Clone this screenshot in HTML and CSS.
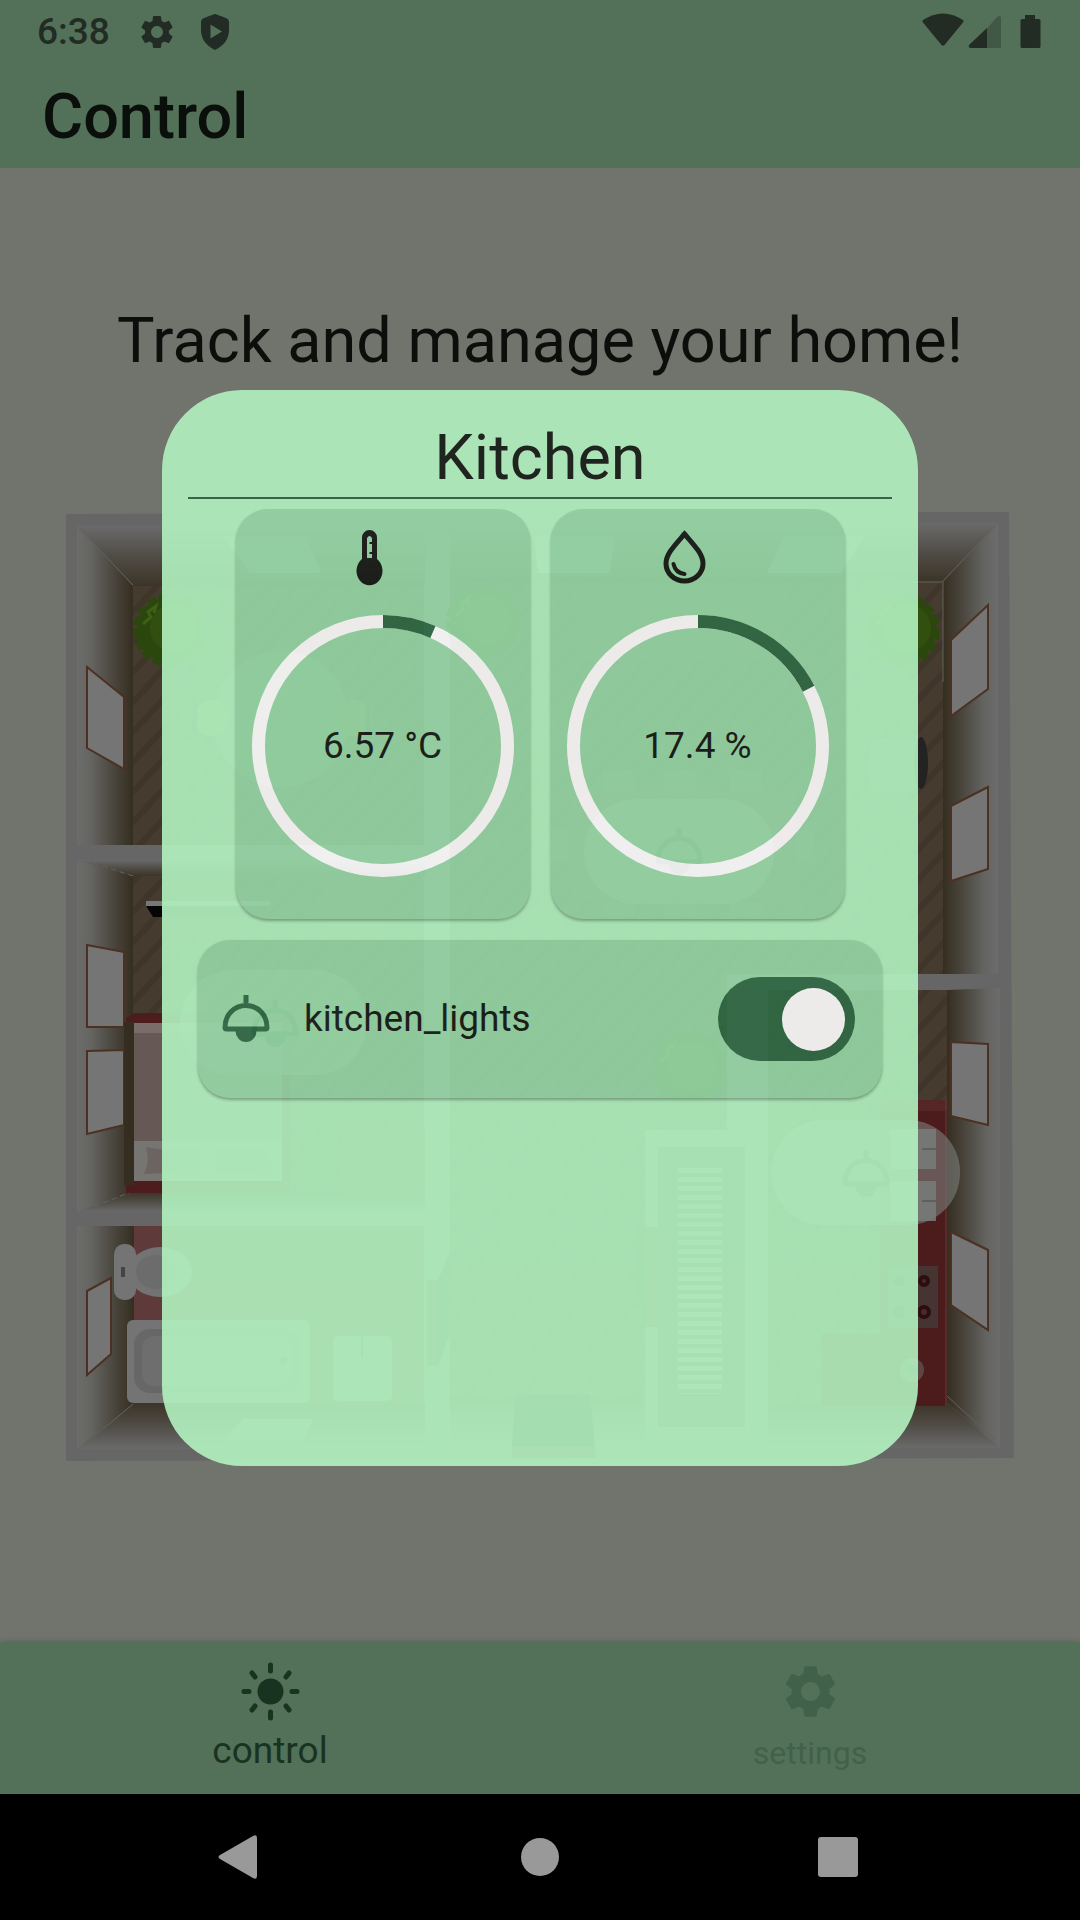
FILE: index.html
```html
<!DOCTYPE html>
<html lang="en">
<head>
<meta charset="utf-8">
<meta name="viewport" content="width=device-width, initial-scale=1">
<title>Control</title>
<link rel="stylesheet" href="styles.css">
</head>
<body>
<svg class="defs" width="0" height="0" aria-hidden="true">
  <defs>
    <symbol id="gear" viewBox="0 0 24 24"><path d="M19.14 12.94c.04-.3.06-.61.06-.94 0-.32-.02-.64-.07-.94l2.03-1.58c.18-.14.23-.41.12-.61l-1.92-3.32c-.12-.22-.37-.29-.59-.22l-2.39.96c-.5-.38-1.03-.7-1.62-.94l-.36-2.54c-.04-.24-.24-.41-.48-.41h-3.84c-.24 0-.43.17-.47.41l-.36 2.54c-.59.24-1.13.57-1.62.94l-2.39-.96c-.22-.08-.47 0-.59.22L2.74 8.87c-.12.21-.08.47.12.61l2.03 1.58c-.05.3-.09.63-.09.94s.02.64.07.94l-2.03 1.58c-.18.14-.23.41-.12.61l1.92 3.32c.12.22.37.29.59.22l2.39-.96c.5.38 1.03.7 1.62.94l.36 2.54c.05.24.24.41.48.41h3.84c.24 0 .44-.17.47-.41l.36-2.54c.59-.24 1.13-.56 1.62-.94l2.39.96c.22.08.47 0 .59-.22l1.92-3.32c.12-.22.07-.47-.12-.61l-2.01-1.58zM12 15.6c-1.98 0-3.6-1.62-3.6-3.6s1.62-3.6 3.6-3.6 3.6 1.62 3.6 3.6-1.62 3.6-3.6 3.6z"/></symbol>
    <symbol id="lamp" viewBox="0 0 48 48"><path d="M21.500 0h5v8h-5z"/><path d="M3 32.500C3 20 12 10.500 24 10.500S45 20 45 32.500q0 1.500-1.500 1.500h-39Q3 34 3 32.500z" fill="none" stroke="currentColor" stroke-width="5"/><path d="M13.500 36h21a10.500 11 0 0 1-21 0z"/></symbol>
  </defs>
</svg>
<div class="screen">
  <header class="top">
    <div class="status">
      <div class="status-group">
        <time class="clock">6:38</time>
        <svg class="status-icon gear-small" aria-hidden="true"><use href="#gear"/></svg>
        <svg class="status-icon" viewBox="0 0 40 40" aria-hidden="true"><path fill-rule="evenodd" d="M20 2q1 0 12 4.500 2 1 2 3.500v8q0 13-14 20Q6 31 6 18v-8q0-2.500 2-3.500Q19 2 20 2zM15.500 12.500v14L27 19.500z"/></svg>
      </div>
      <svg class="signals" viewBox="0 0 120 40" aria-hidden="true">
        <path d="M2 9Q22-4 42 9q1 1 0 2.500L23.500 34q-1.500 1.500-3 0L2 11.500Q1 10 2 9z"/>
        <path opacity=".35" d="M66 17.500 76 6q2-2 4 0v30q0 1-1 1H66z"/>
        <path d="M66 17v20H49q-2-1-1-3z"/>
        <path d="M104 4h10v4h4q1.500 0 1.500 1.500v26q0 1.500-1.500 1.500h-17q-1.500 0-1.500-1.500v-26q0-1.500 1.500-1.500h3z"/>
      </svg>
    </div>
    <h1 class="app-title">Control</h1>
  </header>

  <main class="content">
    <p class="headline">Track and manage your home!</p>
    <svg class="plan" viewBox="66 512 948 950" role="img" aria-label="Floor plan">
      <defs>
        <linearGradient id="wl"><stop offset="0" stop-color="#6c6c6c"/><stop offset=".25" stop-color="#646461"/><stop offset=".6" stop-color="#4d4a42"/><stop offset="1" stop-color="#352d20"/></linearGradient>
        <linearGradient id="wr" x1="1" x2="0"><stop offset="0" stop-color="#6c6c6c"/><stop offset=".25" stop-color="#646461"/><stop offset=".6" stop-color="#4d4a42"/><stop offset="1" stop-color="#352d20"/></linearGradient>
        <linearGradient id="wt" x2="0" y2="1"><stop offset="0" stop-color="#6a6a6a"/><stop offset=".5" stop-color="#504d47"/><stop offset="1" stop-color="#3b3427"/></linearGradient>
        <linearGradient id="wb" x2="0" y1="1" y2="0"><stop offset="0" stop-color="#6a6a6a"/><stop offset=".5" stop-color="#504d47"/><stop offset="1" stop-color="#3b3427"/></linearGradient>
        <pattern id="wood" width="40" height="30" patternUnits="userSpaceOnUse" patternTransform="skewY(-47)"><path fill="#453c2f" d="M0 0h40v30H0z"/><path fill="#3f352a" d="M0 0h40v9H0z"/></pattern>
        <pattern id="steps" y="1168" x="678" width="44" height="9" patternUnits="userSpaceOnUse"><path fill="#777" d="M0 0h44v5H0z"/></pattern>
        <g id="tree"><circle r="33" fill="#2c470d"/><circle r="33" fill="none" stroke="#2c470d" stroke-width="8" stroke-dasharray="9 3"/><circle r="24" cx="4" cy="-2" fill="#334f10"/><path d="M-27-6l8-7-3-5 8-6-2 7" fill="none" stroke="#3c6116" stroke-width="3"/></g>
      </defs>
      <path fill="#666" d="M66 514l943-2 5 946-948 3z"/>

      <g stroke="none">
        <path fill="url(#wl)" d="M77 526l56 60v259H77z"/><path fill="url(#wt)" d="M77 526h348v60H133z"/>
        <path fill="url(#wl)" d="M77 860l56 16v316l-56 20z"/><path fill="url(#wt)" d="M77 860h348v16H133z"/><path fill="url(#wb)" d="M77 1212l56-20h292v20z"/>
        <path fill="url(#wl)" d="M77 1226h57v177l-57 46z"/><path fill="url(#wb)" d="M77 1449l57-46h291v46z"/>
        <path fill="url(#wt)" d="M450 523h548l-55 59H450z"/><path fill="url(#wr)" d="M998 523v451h-55V582z"/>
        <path fill="url(#wr)" d="M1000 988v460l-53-45V990z"/><path fill="url(#wb)" d="M768 1403h179l53 45H768z"/><path fill="url(#wb)" d="M450 1395h195v52H450z"/>
      </g>
      <path fill="url(#wood)" d="M133 586h291v259H133zM133 876h291v316H133zM450 582h493v392H450zM450 974h195v421H450zM645 974h82v156h-82zM768 990h179v413H768z"/>
      <path fill="#5f3a3a" d="M134 1226h290v177H134z"/>
      <path d="M202 1226v177M244 1226v177M320 1226v177M396 1226v177M134 1259h290M134 1365h290" stroke="#563434" fill="none"/>
      <path d="M79 528l54 57M996 525l-54 57h-40M943 582v100M133 1404l-50 42M947 1396l48 44" fill="none" stroke="#62625b"/>
      <path d="M133 876l-42-14M133 1191l-42 17" fill="none" stroke="#62625b" stroke-dasharray="5 4"/>
      <path fill="#454040" d="M658 1147h87v280h-87z"/><path fill="url(#steps)" d="M678 1168h44v226h-44z"/>
      <path fill="#5c3b36" d="M646 1227h12v100h-12zM427 1280h11v86h-11z"/><path fill="#39332c" d="M636 1210l10 17v100l-10-32zM450 1252l-12 28v86l12-32z"/>

      <g fill="#757575" stroke="#4c3123" stroke-width="2">
        <path d="M87 667l37 30v72l-37-21zM87 945l37 7v75H87zM87 1051l37-1v75l-37 9zM87 1291l24-13v76l-24 21z"/>
        <path d="M951 640l37-35v84l-37 27zM951 806l37-19v82l-37 12zM951 1042l37 2v81l-37-9zM951 1232l37 18v80l-37-25z"/>
      </g>
      <path fill="#757575" d="M223 536h83l15 37h-71zM534 536h81l-5 37h-72zM784 536h80l-23 37h-74zM243 1419h70l-11 23h-80z"/>

      <use href="#tree" x="170" y="630"/><use href="#tree" x="903" y="630"/><use href="#tree" x="483" y="622"/><use href="#tree" x="688" y="1068"/>
      <circle cx="281" cy="719" r="68" fill="#56564a"/><circle cx="212" cy="718" r="18" fill="#666640"/><circle cx="354" cy="718" r="18" fill="#5a5a3c"/>
      <path d="M187 695l8 6v32l-8 3M376 695l-8 6v32l8 3" fill="none" stroke="#333" stroke-width="4"/>
      <path fill="#4c3c2d" d="M571 586h215v20H571zM578 606h203v55H578z"/><path fill="#513a30" d="M571 793h224v107H571z"/>
      <path fill="#524a3a" d="M602 770h32v22h-32zM664 770h32v22h-32zM730 770h32v22h-32zM551 830h18v32h-18zM796 830h18v32h-18zM602 902h32v14h-32zM664 902h32v14h-32zM730 902h32v14h-32z"/>
      <rect x="870" y="738" width="46" height="54" rx="8" fill="#4c4744"/><ellipse cx="921" cy="763" rx="7" ry="26" fill="#242323"/>
      <path fill="#523e34" d="M177 888h64v46h-64zM325 876h60v60h-60zM342 1127h83v70h-83z"/>
      <path fill="#777" d="M146 901h124v6H146z"/><path fill="#050505" d="M146 906h16v11h-9zM162 906h0z"/><path fill="#35302a" d="M162 906h108l-12 11h-96z"/>

      <path fill="#4d1c1c" d="M126 1018l9-5h155v180H126v-8z"/><path fill="#352d20" d="M124 1022h10v163h-10z"/>
      <path fill="#7a6c69" d="M134 1023h148v10H134z"/><path fill="#665955" d="M134 1033h148v108H134z"/><path fill="#777572" d="M134 1141h148v40H134z"/>
      <path fill="#6c6460" d="M146 1147q30 6 52 1 3 16 0 28-26-4-54-2 6-12 2-27zM216 1147q26 5 50 1 6 16 4 28-26-4-54-2z"/>

      <ellipse cx="160" cy="1272" rx="32" ry="25" fill="#737373"/><ellipse cx="156" cy="1272" rx="20" ry="17" fill="#6c6c6c"/><rect x="114" y="1244" width="22" height="56" rx="10" fill="#747474"/><path fill="#454545" d="M121 1267h4v10h-4z"/>
      <rect x="127" y="1320" width="183" height="83" rx="6" fill="#747474"/><rect x="134" y="1329" width="166" height="64" rx="16" fill="#676767"/><rect x="142" y="1336" width="150" height="50" rx="12" fill="#6e6e6e"/><circle cx="283" cy="1361" r="4" fill="#555"/>
      <rect x="333" y="1336" width="59" height="65" rx="5" fill="#747474"/><path stroke="#444" stroke-width="2" d="M362 1332v26"/>

      <path fill="#4c1b1b" d="M880 1100h67v306H822v-72h58z"/><path fill="#542626" d="M880 1100h67v11h-67z"/><path d="M946 1100v306" stroke="#5c4040"/>
      <path fill="#6e6e6e" d="M890 1129h46v40h-46zM890 1181h46v40h-46z"/><path d="M922 1149h14M922 1201h14" stroke="#333" stroke-width="2"/>
      <path fill="#453432" d="M888 1266h50v62h-50z"/><g fill="#4a2a28" stroke="#2d0e0f" stroke-width="4"><circle cx="924" cy="1281" r="4"/><circle cx="924" cy="1312" r="5"/><circle cx="899" cy="1281" r="3"/><circle cx="899" cy="1312" r="4"/></g>
      <circle cx="912" cy="1370" r="12" fill="#5c4644"/><circle cx="912" cy="1370" r="5" fill="#333"/>
      <path fill="#241f1c" d="M515 1395h75l5 52h-83z"/><path fill="#5c3b36" d="M512 1447h83v11h-83z"/>

      <g fill="#797d78" fill-opacity=".62"><rect x="180" y="970" width="187" height="105" rx="52"/><rect x="584" y="799" width="190" height="105" rx="52"/><rect x="771" y="1120" width="189" height="105" rx="52"/></g>
      <g color="#24372a" fill="#24372a"><use href="#lamp" x="251" y="1000" width="48" height="48"/><use href="#lamp" x="655" y="828" width="48" height="48"/><use href="#lamp" x="842" y="1150" width="48" height="48"/></g>
    </svg>
  </main>

  <nav class="tabs" aria-label="Main">
    <a class="tab tab-active" href="#control">
      <svg class="tab-icon" viewBox="0 0 63 63" aria-hidden="true"><circle cx="31.500" cy="31.500" r="13"/><path fill="none" stroke="currentColor" stroke-width="5" stroke-linecap="round" d="M31.500 5v6M31.500 52v6M5 31.500h5M53 31.500h5M13 13l3 4M50 13l-3 4M13 50l3-4M50 50l-3-4"/></svg>
      <span class="tab-label">control</span>
    </a>
    <a class="tab" href="#settings">
      <svg class="tab-icon" aria-hidden="true"><use href="#gear"/></svg>
      <span class="tab-label">settings</span>
    </a>
  </nav>

  <div class="system-nav">
    <button class="system-key" aria-label="Back"><svg viewBox="0 0 48 48" aria-hidden="true"><path d="M4 22 37 3q4-2 4 2v38q0 4-4 2L4 26q-3-2 0-4z"/></svg></button>
    <button class="system-key" aria-label="Home"><svg viewBox="0 0 48 48" aria-hidden="true"><circle cx="24" cy="24" r="19"/></svg></button>
    <button class="system-key" aria-label="Recent apps"><svg viewBox="0 0 48 48" aria-hidden="true"><rect x="2" y="4" width="40" height="40" rx="3"/></svg></button>
  </div>

  <div class="overlay">
    <section class="dialog" role="dialog" aria-modal="true" aria-labelledby="room">
      <h2 class="room" id="room">Kitchen</h2>
      <div class="gauges">
        <article class="card gauge">
          <svg class="gauge-icon" viewBox="0 0 63 63" aria-label="Temperature"><path fill-rule="evenodd" d="M24 12.500a7.500 7.500 0 0 1 15 0V34a13 14.500 0 1 1-15 0zM29 13v20h5v-4h-2.500v-2H34v-8h-2.500v-2H34v-4q-2.500-4-5 0z"/></svg>
          <div class="dial">
            <svg class="ring" viewBox="0 0 262 262" aria-hidden="true"><circle class="ring-track" cx="131" cy="131" r="124.500"/><circle class="ring-value" cx="131" cy="131" r="124.500" pathLength="100" stroke-dasharray="6.570 100"/></svg>
            <span class="reading">6.57 °C</span>
          </div>
        </article>
        <article class="card gauge">
          <svg class="gauge-icon" viewBox="0 0 63 63" aria-label="Humidity"><path fill="none" stroke="currentColor" stroke-width="5" d="M31.500 9C22 20 13 29 13 38.500a18.500 17.500 0 0 0 37 0C50 29 41 20 31.500 9z"/><path fill="none" stroke="currentColor" stroke-width="4" stroke-linecap="round" d="M20.500 39q2 9 11 10"/></svg>
          <div class="dial">
            <svg class="ring" viewBox="0 0 262 262" aria-hidden="true"><circle class="ring-track" cx="131" cy="131" r="124.500"/><circle class="ring-value" cx="131" cy="131" r="124.500" pathLength="100" stroke-dasharray="17.400 100"/></svg>
            <span class="reading">17.4 %</span>
          </div>
        </article>
      </div>
      <div class="card device">
        <svg class="device-icon" aria-hidden="true"><use href="#lamp"/></svg>
        <label class="device-name" for="kitchen-lights">kitchen_lights</label>
        <input class="switch" id="kitchen-lights" type="checkbox" role="switch" checked>
      </div>
    </section>
  </div>
</div>
</body>
</html>
```
FILE: styles.css
```css
* { box-sizing: border-box; }

body {
  margin: 0;
  font-family: Roboto, "Liberation Sans", sans-serif;
  background: #000;
}

svg { display: block; fill: currentColor; }

.defs { position: absolute; }

.screen {
  position: relative;
  display: flex;
  flex-direction: column;
  min-height: 100vh;
}

.top { background: #527158; color: #0b0f0b; }

.status {
  display: flex;
  align-items: center;
  justify-content: space-between;
  height: 64px;
  padding: 0 39px 0 37px;
  color: #222c24;
}

.status-group { display: flex; align-items: center; }

.clock { font-size: 37px; line-height: 44px; font-weight: 500; }

.status-icon { width: 40px; height: 40px; margin-left: 18px; }
.gear-small { margin-left: 27px; }

.signals { width: 120px; height: 40px; margin-top: -2px; }

.app-title {
  margin: 0;
  padding: 16px 42px 15px;
  font-size: 63px;
  line-height: 73px;
  font-weight: 500;
}

.content {
  flex: 1;
  display: flex;
  flex-direction: column;
  align-items: center;
  padding: 136px 66px;
  background: #71736d;
}

.headline {
  margin: 0 0 134px;
  font-size: 63px;
  line-height: 74px;
  color: #0c0e0c;
  text-align: center;
}

.plan { width: 100%; }

.tabs {
  display: flex;
  height: 152px;
  background: #527158;
  box-shadow: 0 0 6px rgba(0, 0, 0, .2);
}

.tab {
  flex: 1;
  display: flex;
  flex-direction: column;
  align-items: center;
  gap: 6px;
  padding-top: 18px;
  color: #42614a;
  text-decoration: none;
  font-size: 32px;
  line-height: 48px;
}

.tab-active { color: #183320; font-size: 37px; line-height: 44px; }

.tab-icon { width: 63px; height: 63px; }

.system-nav {
  display: flex;
  align-items: center;
  justify-content: space-between;
  height: 126px;
  padding: 0 192px;
  background: #000;
}

.system-key {
  display: grid;
  place-items: center;
  width: 96px;
  height: 96px;
  padding: 0;
  border: 0;
  background: none;
  color: #999;
}

.system-key svg { width: 48px; height: 48px; }

.overlay {
  position: absolute;
  inset: 0 0 126px;
  display: grid;
  place-items: center;
  padding-top: 62px;
}

.dialog {
  display: flex;
  flex-direction: column;
  gap: 21px;
  width: 70%;
  min-height: 1076px;
  padding: 30px 26px;
  border-radius: 80px;
  background: #b2f2c0;
  color: #181c17;
  opacity: .9;
}

.room {
  margin: 0 0 -11px;
  padding-bottom: 2px;
  border-bottom: 2px solid #356245;
  font-size: 63px;
  line-height: 75px;
  font-weight: 400;
  text-align: center;
}

.card {
  border-radius: 32px;
  background: #97d8a7;
  box-shadow: 0 2px 3px rgba(0, 0, 0, .3);
}

.gauges { display: flex; justify-content: center; gap: 21px; }

.gauge {
  display: flex;
  flex-direction: column;
  align-items: center;
  gap: 27px;
  padding: 16px 16px 42px;
}

.gauge-icon { width: 63px; height: 63px; margin-right: 26px; }

.dial { display: grid; place-items: center; }

.ring, .reading { grid-area: 1 / 1; }

.ring { width: 262px; height: 262px; transform: rotate(-90deg); }

.ring circle { fill: none; stroke-width: 13; }
.ring .ring-track { stroke: #fff; }
.ring .ring-value { stroke: #306a45; }

.reading, .device-name { font-size: 37px; line-height: 44px; }

.device {
  display: flex;
  align-items: center;
  height: 158px;
  margin: 0 10px;
  padding: 0 27px 0 24px;
}

.device-icon { width: 48px; height: 48px; color: #306a45; }

.device-name { flex: 1; padding-left: 34px; }

.switch {
  appearance: none;
  display: flex;
  align-items: center;
  justify-content: flex-end;
  width: 137px;
  height: 84px;
  margin: 0;
  padding: 10px;
  border-radius: 42px;
  background: #306a45;
}

.switch::before {
  content: "";
  width: 63px;
  height: 63px;
  border-radius: 50%;
  background: #fff;
}

.switch:not(:checked) { justify-content: flex-start; }
```
